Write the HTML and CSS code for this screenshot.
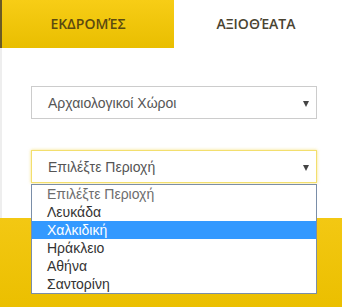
FILE: index.html
```html
<!DOCTYPE html>
<html lang="el">
<head>
<meta charset="utf-8">
<link rel="stylesheet" href="styles.css">
</head>
<body>
<div class="tabs">
  <div class="tab active">ΕΚΔΡΟΜΈΣ</div>
  <div class="tab">ΑΞΙΟΘΈΑΤΑ</div>
</div>
<div class="panel">
  <div class="select">
    <span>Αρχαιολογικοί Χώροι</span>
    <span class="arrow"></span>
  </div>
  <div class="select-wrap">
    <div class="select focus">
      <span>Επιλέξτε Περιοχή</span>
      <span class="arrow"></span>
    </div>
    <ul class="listbox">
      <li class="placeholder">Επιλέξτε Περιοχή</li>
      <li>Λευκάδα</li>
      <li class="hl">Χαλκιδική</li>
      <li>Ηράκλειο</li>
      <li>Αθήνα</li>
      <li>Σαντορίνη</li>
    </ul>
  </div>
</div>
<div class="footer"></div>
</body>
</html>
```

FILE: styles.css
```css
html, body {
  margin: 0;
  padding: 0;
  background: #fff;
}
body {
  width: 342px;
  height: 307px;
  overflow: hidden;
  font-family: "Liberation Sans", Arial, sans-serif;
}
.tabs {
  display: flex;
  height: 48px;
}
.tab {
  display: flex;
  align-items: center;
  justify-content: center;
  font-family: "Open Sans", sans-serif;
  font-size: 14px;
  font-weight: 600;
  color: #4a4432;
}
.tab.active {
  width: 172px;
  border-left: 2px solid #6b5a24;
  background: linear-gradient(#f7cd16, #e9be00);
  color: #5c4a10;
  padding-bottom: 1px;
}
.tab:not(.active) {
  flex: 1;
  padding-right: 4px;
  padding-bottom: 1px;
}
.panel {
  height: 170px;
  box-sizing: border-box;
  border-left: 2px solid #eee;
  padding: 38px 25px 0 29px;
  display: flex;
  flex-direction: column;
  gap: 31px;
}
.select-wrap {
  position: relative;
}
.select {
  height: 33px;
  box-sizing: border-box;
  border: 1px solid #ccc;
  display: flex;
  align-items: center;
  justify-content: space-between;
  padding: 0 7px 0 16px;
  font-size: 14px;
  color: #555;
}
.select.focus {
  height: 33px;
  border-color: #f3df6e;
  box-shadow: 0 0 3px rgba(240, 205, 40, 0.6);
}
.arrow {
  width: 0;
  height: 0;
  border-left: 3.5px solid transparent;
  border-right: 3.5px solid transparent;
  border-top: 6px solid #444;
  margin-top: 2px;
}
.listbox {
  position: absolute;
  top: 34px;
  left: 0;
  right: 0;
  margin: 0;
  padding: 0;
  list-style: none;
  background: #fff;
  border: 1px solid #7a8ea8;
  z-index: 2;
}
.listbox li {
  height: 18px;
  line-height: 18px;
  padding-left: 15px;
  font-size: 14px;
  color: #333;
}
.listbox li.placeholder {
  color: #6d6d6d;
}
.listbox li.hl {
  background: #3399ff;
  color: #fff;
}
.footer {
  height: 89px;
  background: linear-gradient(#f3c813, #ebbf00);
}
```
